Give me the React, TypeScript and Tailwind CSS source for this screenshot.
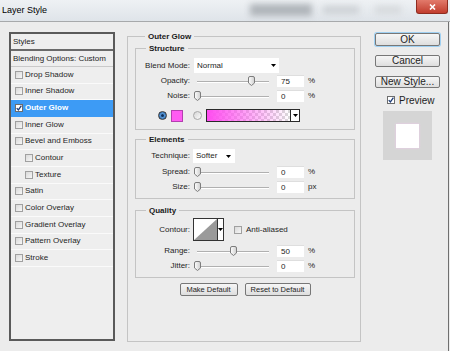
import React from 'react'

const styles = [
  { label: 'Drop Shadow' },
  { label: 'Inner Shadow' },
  { label: 'Outer Glow', checked: true, active: true },
  { label: 'Inner Glow' },
  { label: 'Bevel and Emboss' },
  { label: 'Contour', sub: true },
  { label: 'Texture', sub: true },
  { label: 'Satin' },
  { label: 'Color Overlay' },
  { label: 'Gradient Overlay' },
  { label: 'Pattern Overlay' },
  { label: 'Stroke' },
]

function Box({ checked = false }: { checked?: boolean }) {
  return (
    <span
      className={`flex h-[8px] w-[8px] shrink-0 items-center justify-center border ${
        checked ? 'border-[#6d6d6d] bg-white' : 'border-[#a0a0a0] bg-[linear-gradient(135deg,#d9d9d9,#f7f7f7)]'
      }`}
    >
      {checked && (
        <svg width="6" height="6" viewBox="0 0 6 6">
          <path d="M0.7 3.1 L2.4 4.9 L5.4 0.7" fill="none" stroke="#1d3c78" strokeWidth="1.3" />
        </svg>
      )}
    </span>
  )
}

function Arrow() {
  return (
    <svg width="5" height="3" viewBox="0 0 5 3" className="shrink-0">
      <path d="M0 0H5L2.5 3Z" fill="#000" />
    </svg>
  )
}

function Field({ value }: { value: string }) {
  return (
    <div className="h-[12px] w-[27px] border-t border-[#dedede] bg-white pl-[4px] text-[8px] leading-[11px]">
      {value}
    </div>
  )
}

function Slider({ value }: { value: number }) {
  return (
    <div className="relative h-[11px] w-[78px]">
      <div className="absolute left-[3px] right-[3px] top-[5px] h-px bg-[#b0b0b0] shadow-[0_1px_0_#ffffff]" />
      <svg
        width="7"
        height="10"
        viewBox="0 0 7 10"
        className="absolute top-0"
        style={{ left: `${(value / 100) * 72}px` }}
      >
        <defs>
          <linearGradient id="th" x1="0" y1="0" x2="1" y2="0">
            <stop offset="0" stopColor="#ffffff" />
            <stop offset="1" stopColor="#cfcfcf" />
          </linearGradient>
        </defs>
        <path d="M2 0.5H5Q6.5 0.5 6.5 2V7L3.5 9.5L0.5 7V2Q0.5 0.5 2 0.5Z" fill="url(#th)" stroke="#7d7d7d" />
      </svg>
    </div>
  )
}

function SliderRow({ label, value, unit, className }: { label: string; value: number; unit: string; className: string }) {
  return (
    <div className={`flex h-[12px] items-center ${className}`}>
      <div className="w-[54px] text-right">{label}</div>
      <div className="ml-[4px]">
        <Slider value={value} />
      </div>
      <div className="ml-[5px]">
        <Field value={String(value)} />
      </div>
      <div className="ml-[4px]">{unit}</div>
    </div>
  )
}

function Legend({ children }: { children: React.ReactNode }) {
  return <legend className="ml-[10px] px-[3px] text-[8px] font-bold leading-[11px] text-[#1a1a1a]">{children}</legend>
}

function Button({ children, className }: { children: React.ReactNode; className: string }) {
  return (
    <div
      className={`flex items-center justify-center rounded-[2px] border border-[#777] bg-[linear-gradient(to_bottom,#f6f6f6,#dedede)] leading-none ${className}`}
    >
      {children}
    </div>
  )
}

export default function App() {
  return (
    <div className="h-[351px] w-[450px] overflow-hidden bg-[#ececec] font-['Liberation_Sans',Arial,sans-serif] text-[8px] text-[#1e1e1e]">
      {/* title bar */}
      <div className="flex h-[22px] border-b border-[#a7a9ab] bg-[linear-gradient(to_bottom,#eef1f4,#dfe4e9)]">
        <div className="w-[250px] pl-[2px] pt-[4px] text-[9px] leading-[12px] text-black">Layer Style</div>
        <div className="mt-[4px] h-[12px] w-[62px] bg-[#b0b5ba] blur-[3px]" />
        <div className="ml-[11px] mt-[6px] h-[8px] w-[36px] bg-[#cdd1d5] blur-[3px]" />
        <div className="ml-[16px] mt-[6px] h-[8px] w-[26px] bg-[#d6d9dc] blur-[3px]" />
        <div className="ml-[15px] flex h-[14px] w-[32px] items-center justify-center rounded-b-[3px] border border-t-0 border-[#8e2c20] bg-[linear-gradient(to_bottom,#e27a6b,#c13d2e)]">
          <svg width="7" height="6" viewBox="0 0 7 6">
            <path d="M1 0.5L6 5.5M6 0.5L1 5.5" stroke="#fff" strokeWidth="1.6" />
          </svg>
        </div>
      </div>

      <div className="flex h-[329px] w-[449px] border-r border-[#6f6f6f]">
        {/* styles list */}
        <div className="ml-[9px] mt-[10px] flex h-[309px] w-[106px] flex-col border-2 border-[#5a5a5a] bg-[#eeeeee]">
          <div className="flex h-[17px] items-center border-b-2 border-[#6a6a6a] pl-[2px]">Styles</div>
          <div className="flex h-[16px] items-center border-b border-[#c9c9c9] pl-[2px]">Blending Options: Custom</div>
          {styles.map((s) => (
            <div
              key={s.label}
              className={`flex h-[16.67px] items-center border-b ${
                s.active ? 'border-[#3d9bf5] bg-[#3d9bf5] font-bold text-white' : 'border-[#fafafa]'
              } ${s.sub ? 'pl-[14px]' : 'pl-[4px]'}`}
            >
              <Box checked={s.checked} />
              <span className="ml-[2px]">{s.label}</span>
            </div>
          ))}
        </div>

        {/* main */}
        <fieldset className="ml-[12px] mt-[9px] h-[311px] w-[234px] border border-[#c4c4c4] pl-[7px] pr-[5px]">
          <Legend>Outer Glow</Legend>

          <fieldset className="mt-[1px] border border-[#c4c4c4] pb-[7px]">
            <Legend>Structure</Legend>
            <div className="mt-[4px] flex h-[15px] items-center">
              <div className="w-[54px] text-right">Blend Mode:</div>
              <div className="ml-[4px] flex h-[15px] w-[85px] items-center justify-between bg-white pl-[3px] pr-[3px]">
                <span>Normal</span>
                <Arrow />
              </div>
            </div>
            <SliderRow label="Opacity:" value={75} unit="%" className="mt-[2px]" />
            <SliderRow label="Noise:" value={0} unit="%" className="mt-[3px]" />
            <div className="mt-[7px] flex h-[13px] items-center">
              <span className="ml-[22px] flex h-[9px] w-[9px] items-center justify-center rounded-full border border-[#3a3a3a] bg-[radial-gradient(circle,#7ab8f0,#1f5fa8)]">
                <span className="h-[3px] w-[3px] rounded-full bg-[#0d2f5c]" />
              </span>
              <span className="ml-[4px] h-[12px] w-[12px] border border-[#b43fb0] bg-[#ff5cf2]" />
              <span className="ml-[10px] h-[9px] w-[9px] rounded-full border border-[#a8a8a8] bg-[linear-gradient(135deg,#d6d6d6,#fbfbfb)]" />
              <div className="ml-[4px] flex h-[13px] w-[94px] border border-[#2a2a2a]">
                <div className="h-full flex-1 bg-[repeating-conic-gradient(#d9d9d9_0%_25%,#ffffff_0%_50%)] bg-[length:6px_6px]">
                  <div className="h-full w-full bg-[linear-gradient(to_right,#ff4cf0,rgba(255,76,240,0))]" />
                </div>
                <div className="flex w-[9px] items-center justify-center border-l border-[#2a2a2a] bg-white">
                  <Arrow />
                </div>
              </div>
            </div>
          </fieldset>

          <fieldset className="mt-[4px] border border-[#c4c4c4] pb-[5px]">
            <Legend>Elements</Legend>
            <div className="mt-[4px] flex h-[14px] items-center">
              <div className="w-[54px] text-right">Technique:</div>
              <div className="ml-[3px] flex h-[14px] w-[42px] items-center justify-between bg-white pl-[3px] pr-[4px]">
                <span>Softer</span>
                <Arrow />
              </div>
            </div>
            <SliderRow label="Spread:" value={0} unit="%" className="mt-[3px]" />
            <SliderRow label="Size:" value={0} unit="px" className="mt-[3px]" />
          </fieldset>

          <fieldset className="mt-[6px] border border-[#c4c4c4] pb-[5px]">
            <Legend>Quality</Legend>
            <div className="mt-[2px] flex h-[23px] items-center">
              <div className="w-[54px] text-right">Contour:</div>
              <div className="ml-[3px] flex h-[23px] w-[31px] border border-[#333]">
                <svg width="23" height="21" viewBox="0 0 23 21" className="bg-white">
                  <path d="M0 21L23 0V21Z" fill="#9a9a9a" />
                </svg>
                <div className="flex flex-1 items-center justify-center border-l border-[#333] bg-white">
                  <Arrow />
                </div>
              </div>
              <span className="ml-[10px]">
                <Box />
              </span>
              <span className="ml-[4px]">Anti-aliased</span>
            </div>
            <SliderRow label="Range:" value={50} unit="%" className="mt-[4px]" />
            <SliderRow label="Jitter:" value={0} unit="%" className="mt-[3px]" />
          </fieldset>

          <div className="mt-[5px] flex justify-center gap-[7px]">
            <Button className="h-[13px] w-[58px] text-[7.5px]">Make Default</Button>
            <Button className="h-[13px] w-[66px] text-[7.5px]">Reset to Default</Button>
          </div>
        </fieldset>

        {/* right column */}
        <div className="ml-[14px] mt-[11px] flex w-[65px] flex-col text-[10px]">
          <Button className="h-[13px] w-[65px] border-[#3c7fb1] shadow-[0_0_0_1px_#9fd0f2]">OK</Button>
          <Button className="mt-[9px] h-[12px] w-[65px]">Cancel</Button>
          <Button className="mt-[9px] h-[12px] w-[65px]">New Style...</Button>
          <div className="mt-[7px] flex h-[10px] items-center pl-[12px]">
            <Box checked />
            <span className="ml-[4px]">Preview</span>
          </div>
          <div className="ml-[8px] mt-[6px] flex h-[49px] w-[49px] items-center justify-center bg-[#d5d5d5]">
            <div className="h-[24px] w-[23px] bg-white shadow-[0_0_2px_#f3c6ef]" />
          </div>
        </div>
      </div>
    </div>
  )
}
